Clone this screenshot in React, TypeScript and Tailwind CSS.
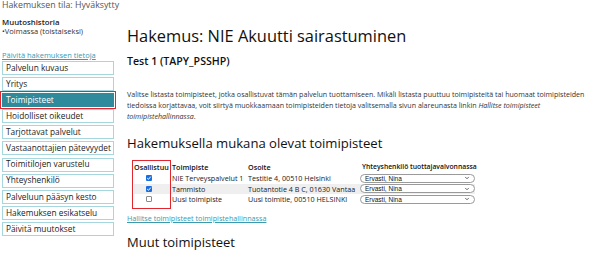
import { ChevronDown } from 'lucide-react'

const navItems = [
  'Palvelun kuvaus',
  'Yritys',
  'Toimipisteet',
  'Hoidolliset oikeudet',
  'Tarjottavat palvelut',
  'Vastaanottajien pätevyydet',
  'Toimitilojen varustelu',
  'Yhteyshenkilö',
  'Palveluun pääsyn kesto',
  'Hakemuksen esikatselu',
  'Päivitä muutokset',
]

const rows = [
  { checked: true, name: 'NIE Terveyspalvelut 1', address: 'Testitie 4, 00510 Helsinki' },
  { checked: true, name: 'Tammisto', address: 'Tuotantotie 4 B C, 01630 Vantaa' },
  { checked: false, name: 'Uusi toimipiste', address: 'Uusi toimitie, 00510 HELSINKI' },
]

function Checkbox({ checked }: { checked: boolean }) {
  if (!checked) {
    return <span className="block w-[6px] h-[6px] rounded-[1px] border border-[#8a8a8a] bg-white" />
  }
  return (
    <span className="flex items-center justify-center w-[6px] h-[6px] rounded-[1px] bg-[#1a6fe0]">
      <svg viewBox="0 0 6 6" className="w-[6px] h-[6px]">
        <path d="M1.2 3.1 L2.5 4.3 L4.8 1.6" fill="none" stroke="white" strokeWidth="1" />
      </svg>
    </span>
  )
}

export default function App() {
  return (
    <div className="relative w-[602px] h-[257px] overflow-hidden bg-white text-[#222] font-['Open_Sans',sans-serif]">
      <div className="flex">
        {/* Sidebar */}
        <div className="w-[116px] pl-[2px] shrink-0">
          <div className="text-[8.8px] leading-[10px] text-[#555] whitespace-nowrap">Hakemuksen tila: Hyväksytty</div>
          <div className="mt-[8px] text-[7.8px] leading-[9px] font-semibold text-[#222]">Muutoshistoria</div>
          <div className="text-[7.5px] leading-[9px] text-[#333]">•Voimassa (toistaiseksi)</div>
          <div className="mt-[14px] text-[7.5px] leading-[10px] text-[#3a9bb0] underline">Päivitä hakemuksen tietoja</div>
          <div className="mt-[1px] flex flex-col gap-[2.1px] w-[112px]">
            {navItems.map((item) =>
              item === 'Toimipisteet' ? (
                <div key={item} className="outline outline-[1.5px] outline-[#e2262f] outline-offset-[1px]">
                  <div className="h-[14px] flex items-center pl-[3px] bg-[#2f8a9b] border border-[#2f8a9b] text-white text-[8.3px] whitespace-nowrap">
                    {item}
                  </div>
                </div>
              ) : (
                <div
                  key={item}
                  className="h-[14px] flex items-center pl-[3px] border border-[#a6d6de] text-[8.3px] text-[#222] bg-white whitespace-nowrap"
                >
                  {item}
                </div>
              ),
            )}
          </div>
        </div>

        {/* Main */}
        <div className="ml-[11px] flex-1">
          <h1 className="mt-[26px] text-[16.4px] leading-[20px] text-[#111] whitespace-nowrap">
            Hakemus: NIE Akuutti sairastuminen
          </h1>
          <div className="mt-[8px] text-[10.6px] leading-[14px] font-semibold text-[#111]">Test 1 (TAPY_PSSHP)</div>
          <p className="mt-[21px] text-[7.1px] leading-[11px] text-[#333] whitespace-nowrap">
            Valitse listasta toimipisteet, jotka osallistuvat tämän palvelun tuottamiseen. Mikäli listasta puuttuu
            toimipisteitä tai huomaat toimipisteiden
            <br />
            tiedoissa korjattavaa, voit siirtyä muokkaamaan toimipisteiden tietoja valitsemalla sivun alareunasta linkin{' '}
            <i>Hallitse toimipisteet</i>
            <br />
            <i>toimipistehallinnassa</i>.
          </p>
          <h2 className="mt-[13px] text-[13.1px] leading-[16px] text-[#111] whitespace-nowrap">
            Hakemuksella mukana olevat toimipisteet
          </h2>

          <div className="relative mt-[11px] ml-[7px] w-[341px] text-[7.2px] text-[#222]">
            <div className="grid grid-cols-[38px_76px_111px_116px] h-[11px] items-center font-semibold text-[#111] whitespace-nowrap">
              <div>Osallistuu</div>
              <div>Toimipiste</div>
              <div>Osoite</div>
              <div className="pl-[3px] text-[6.8px]">Yhteyshenkilö tuottajavalvonnassa</div>
            </div>
            {rows.map((row, i) => (
              <div
                key={row.name}
                className={`grid grid-cols-[38px_76px_111px_116px] h-[10.5px] items-center whitespace-nowrap ${
                  i === 1 ? 'bg-[#efefef]' : ''
                }`}
              >
                <div className="flex pl-[12px]">
                  <Checkbox checked={row.checked} />
                </div>
                <div>{row.name}</div>
                <div>{row.address}</div>
                <div className="pl-[1px]">
                  <div className="flex items-center justify-between h-[9px] w-[115px] rounded-full border border-[#9a9a9a] bg-white pl-[4px] pr-[4px] font-['Liberation_Sans',sans-serif] text-[6.5px] text-[#111]">
                    <span>Ervasti, Nina</span>
                    <ChevronDown size={6} strokeWidth={3} className="text-[#333]" />
                  </div>
                </div>
              </div>
            ))}
            <div className="absolute left-[-2px] top-[-2.5px] w-[39px] h-[49px] border-[1.5px] border-[#e2262f]" />
          </div>

          <div className="mt-[8px] text-[7.2px] leading-[10px] text-[#3a9bb0] underline whitespace-nowrap">
            Hallitse toimipisteet toimipistehallinnassa
          </div>
          <h2 className="mt-[11px] text-[13px] leading-[16px] text-[#111]">Muut toimipisteet</h2>
        </div>
      </div>
    </div>
  )
}
